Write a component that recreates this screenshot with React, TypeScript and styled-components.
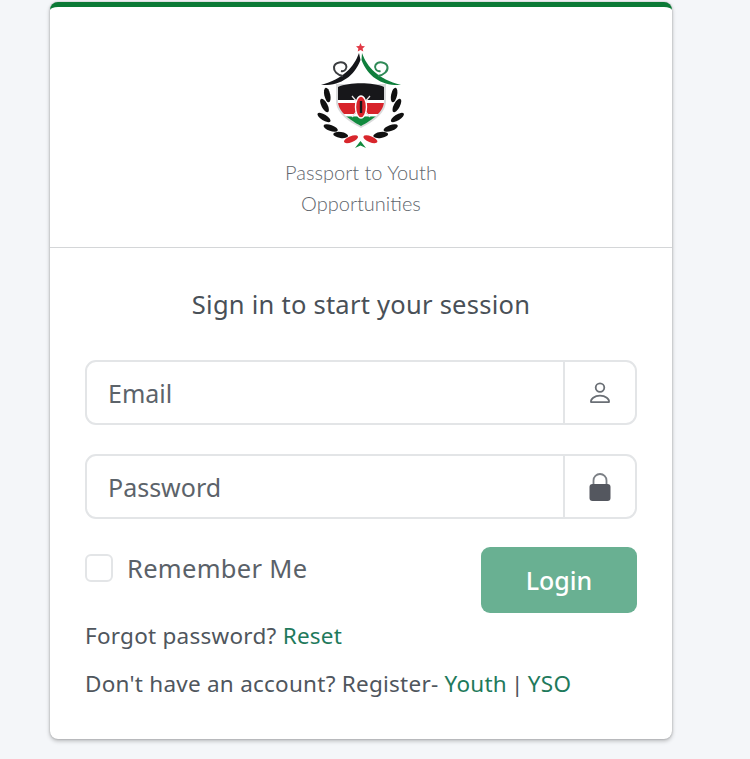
import React from "react";
import styled, { createGlobalStyle } from "styled-components";

const Global = createGlobalStyle`
  html, body { margin: 0; padding: 0; background: #f4f6f9; }
  body { font-family: "Noto Sans", "Open Sans", sans-serif; color: #495057; }
`;
const Page = styled.div`
  width: 750px; height: 759px; overflow: hidden; padding: 2px 0 0 50px; box-sizing: border-box;
`;
const Card = styled.div`
  width: 622px; height: 737px; box-sizing: border-box; background: #fff;
  border-top: 5px solid #0b7a36; border-radius: 8px;
  box-shadow: 0 0 2px rgba(0,0,0,.25), 0 2px 4px rgba(0,0,0,.25);
`;
const Header = styled.div`
  height: 241px; box-sizing: border-box; border-bottom: 1px solid #d4d6d8;
  display: flex; flex-direction: column; align-items: center; padding-top: 34px;
`;
const Logo = styled.svg`
  width: 90px; height: 108px; display: block; margin-left: -1px;
`;
const Brand = styled.div`
  font-family: "Lato", sans-serif; font-weight: 300; font-size: 20px; line-height: 31px;
  text-align: center; color: #5f666d; margin-top: 8px; width: 200px;
`;
const Body = styled.div`
  padding: 38px 35px 0;
`;
const Title = styled.p`
  margin: 0 0 38px; text-align: center; font-size: 25.5px; line-height: 36px; letter-spacing: .25px; color: #495057;
`;
const InputGroup = styled.div`
  display: flex; height: 65px; box-sizing: border-box; margin-bottom: 29px;
  border: 2px solid #e3e5e7; border-radius: 11px;
`;
const Field = styled.div`
  flex: 1; display: flex; align-items: center; padding-left: 21px;
  font-size: 25px; line-height: 60px; color: #5c636a;
`;
const Addon = styled.div`
  width: 70px; border-left: 2px solid #e3e5e7; display: flex; align-items: center; justify-content: center;
  color: #5f656b;
`;
const Row = styled.div`
  display: flex; justify-content: space-between; align-items: flex-start; margin-top: -1px;
`;
const Remember = styled.label`
  display: flex; align-items: center; gap: 14px; font-size: 25.5px; line-height: 42px; letter-spacing: .3px; color: #5a6168;
`;
const Check = styled.span`
  width: 28px; height: 28px; box-sizing: border-box; border: 2px solid #e3e5e7; border-radius: 6px; background: #fff;
`;
const Button = styled.button`
  width: 156px; height: 66px; border: 0; border-radius: 9px; background: #69b092; color: #fff;
  font-family: inherit; font-size: 25px; font-weight: 500;
`;
const Line = styled.p<{ $top: number }>`
  margin: ${p => p.$top}px 0 0; font-size: 22.5px; line-height: 32px; letter-spacing: .25px; color: #4f565d;
`;
const Link = styled.a`
  color: #1f7a5c; text-decoration: none;
`;
const Separator = styled.span`
  margin: 0 -2px;
`;

const leaves: [number, number, number, string][] = [
  [11.3, 54, 78, "#111"], [8.5, 64.5, 62, "#111"], [8, 76.5, 32, "#111"],
  [14.7, 87, 20, "#111"], [24.7, 94, 8, "#111"], [35, 98.3, -22, "#d8262c"],
];

const Leaves = () => (
  <>
    {leaves.map(([x, y, r, c]) => (
      <ellipse key={`${x}-${y}`} cx={x} cy={y} rx="7.5" ry="3" fill={c} transform={`rotate(${r} ${x} ${y})`} />
    ))}
  </>
);

const Emblem = () => (
  <Logo viewBox="0 0 90 108">
    <polygon points="44.5,2 45.8,5 49,5.3 46.6,7.4 47.3,10.6 44.5,9 41.7,10.6 42.4,7.4 40,5.3 43.2,5" fill="#e23a46" />
    <path d="M43 12 C38 26 27 38 5 44 C24 45 38 36 44.5 19 Z" fill="#15161a" />
    <path d="M46 12 C51 26 62 38 85 44 C66 45 52 36 45.5 19 Z" fill="#0f7f3c" />
    <path d="M27 35 C21 34 17.5 30 18 26 C19 21 27 19.5 30 24 C31.5 27 29 31 25 30" fill="none" stroke="#3b3d40" strokeWidth="2" />
    <path d="M62 35 C68 34 72 30 71.5 26 C70.5 21 62.5 19.5 59.5 24 C58 27 60.5 31 64.5 30" fill="none" stroke="#2f8a57" strokeWidth="2" />
    <path d="M20 43 H70 V60 C70 72 57 81 45 87 C33 81 20 72 20 60 Z" fill="#d9dadb" />
    <clipPath id="shield">
      <path d="M22 46 C33 41 57 41 68 46 V60 C68 71 56 79 45 85 C34 79 22 71 22 60 Z" />
    </clipPath>
    <g clipPath="url(#shield)">
      <rect x="20" y="40" width="50" height="19" fill="#17171a" />
      <rect x="20" y="59" width="50" height="3" fill="#fff" />
      <rect x="20" y="62" width="50" height="11" fill="#d8232a" />
      <rect x="20" y="73" width="50" height="2.5" fill="#fff" />
      <rect x="20" y="75.5" width="50" height="12" fill="#118a3e" />
    </g>
    <path d="M36 55 L54 76 M54 55 L36 76" stroke="#e8e8e8" strokeWidth="1.2" />
    <ellipse cx="45" cy="66" rx="5.5" ry="11" fill="#d8232a" stroke="#fff" strokeWidth="1.4" />
    <rect x="43.8" y="60" width="2.4" height="12" fill="#17171a" />
    <Leaves />
    <g transform="translate(89.4 0) scale(-1 1)"><Leaves /></g>
    <path d="M44.5 100 L50 107 L44.5 104.5 L39 107 Z" fill="#118a3e" />
  </Logo>
);

const UserIcon = () => (
  <svg width="22" height="22" viewBox="0 0 22 22">
    <circle cx="11" cy="5.6" r="4.3" fill="none" stroke="#6a6f75" strokeWidth="1.8" />
    <path d="M2 20.2 C1.4 17 5.5 13.6 11 13.6 S20.6 17 20 20.2 Z" fill="none" stroke="#6a6f75" strokeWidth="1.8" strokeLinejoin="round" />
  </svg>
);

const Lock = () => (
  <svg width="22" height="28" viewBox="0 0 22 28">
    <path d="M4.5 12 V7.5 a6.5 6.5 0 0 1 13 0 V12" fill="none" stroke="#7b7f85" strokeWidth="1.8" />
    <rect x="0.5" y="11" width="21" height="17" rx="3" fill="#54575f" />
  </svg>
);

export default function App() {
  return (
    <>
      <Global />
      <Page>
        <Card>
          <Header>
            <Emblem />
            <Brand>Passport to Youth Opportunities</Brand>
          </Header>
          <Body>
            <Title>Sign in to start your session</Title>
            <InputGroup>
              <Field>Email</Field>
              <Addon><UserIcon /></Addon>
            </InputGroup>
            <InputGroup>
              <Field>Password</Field>
              <Addon><Lock /></Addon>
            </InputGroup>
            <Row>
              <Remember><Check />Remember Me</Remember>
              <Button>Login</Button>
            </Row>
            <Line $top={7}>Forgot password? <Link>Reset</Link></Line>
            <Line $top={16}>Don't have an account? Register- <Link>Youth</Link> <Separator>|</Separator> <Link>YSO</Link></Line>
          </Body>
        </Card>
      </Page>
    </>
  );
}
